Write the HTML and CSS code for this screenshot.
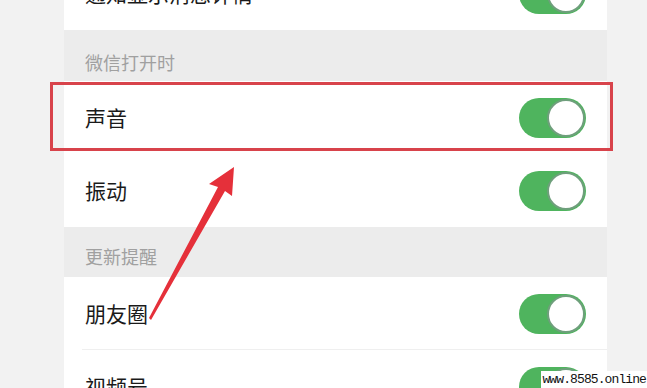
FILE: index.html
```html
<!DOCTYPE html>
<html lang="zh">
<head>
<meta charset="utf-8">
<link rel="stylesheet" href="styles.css">
</head>
<body>
<div class="page">
  <div class="card card-first">
    <div class="row"><span class="label">通知显示消息详情</span><span class="switch"><span class="knob"></span></span></div>
  </div>
  <div class="header header-a">微信打开时</div>
  <div class="card">
    <div class="row row-marked"><span class="label">声音</span><span class="switch"><span class="knob"></span></span><span class="mark"></span></div>
    <div class="row"><span class="label">振动</span><span class="switch"><span class="knob"></span></span></div>
  </div>
  <div class="header header-b">更新提醒</div>
  <div class="card">
    <div class="row row-sep"><span class="label">朋友圈</span><span class="switch"><span class="knob"></span></span></div>
    <div class="row"><span class="label">视频号</span><span class="switch"><span class="knob"></span></span></div>
  </div>
</div>
<svg class="arrow" width="647" height="388" viewBox="0 0 647 388">
  <polygon points="149,318 151,320 225,191 232,196 234,167 209,184 218,187" fill="#e5303a"/>
</svg>
<div class="watermark">www.8585.online</div>
</body>
</html>
```
FILE: styles.css
```css
html, body {
  margin: 0;
  padding: 0;
}
body {
  width: 647px;
  height: 388px;
  overflow: hidden;
  background: #f2f2f2;
  font-family: "Noto Sans CJK SC", "Noto Sans", sans-serif;
  position: relative;
}
.page {
  width: 543px;
  margin-left: 64px;
  display: flex;
  flex-direction: column;
}
.card {
  background: #ffffff;
  display: flex;
  flex-direction: column;
}
.card-first {
  margin-top: -43px;
}
.row {
  height: 73px;
  display: flex;
  align-items: center;
  justify-content: space-between;
  padding: 0 21px 0 21px;
  position: relative;
}
.label {
  font-size: 21px;
  color: #1a1a1a;
  line-height: 1;
}
.switch {
  width: 67px;
  height: 40px;
  border-radius: 20px;
  background: #4fb45e;
  display: flex;
  align-items: center;
  justify-content: flex-end;
  box-sizing: border-box;
  padding-right: 1px;
}
.knob {
  width: 38px;
  height: 38px;
  border-radius: 50%;
  background: #ffffff;
  border: 2px solid #6f9f7c;
  box-sizing: border-box;
}
.row-sep::after {
  content: "";
  position: absolute;
  left: 18px;
  right: 0;
  bottom: 0;
  height: 1px;
  background: #efefef;
}
.header {
  background: #ececec;
  color: #a0a0a0;
  font-size: 18px;
  padding-left: 21px;
  display: flex;
  align-items: flex-end;
  box-sizing: border-box;
}
.header-a {
  height: 51px;
  padding-bottom: 6px;
}
.header-b {
  height: 50px;
  padding-bottom: 8px;
}
.mark {
  position: absolute;
  left: -14px;
  right: -6px;
  top: 1px;
  bottom: 3px;
  border: 3px solid #d8434b;
}
.arrow {
  position: absolute;
  left: 0;
  top: 0;
}
.watermark {
  position: absolute;
  right: 0;
  bottom: 0;
  background: #ffffff;
  font-family: "Liberation Mono", monospace;
  font-size: 13px;
  line-height: 17px;
  padding: 0 1px 0 1px;
  color: #111111;
  letter-spacing: -0.9px;
  white-space: nowrap;
}
```
